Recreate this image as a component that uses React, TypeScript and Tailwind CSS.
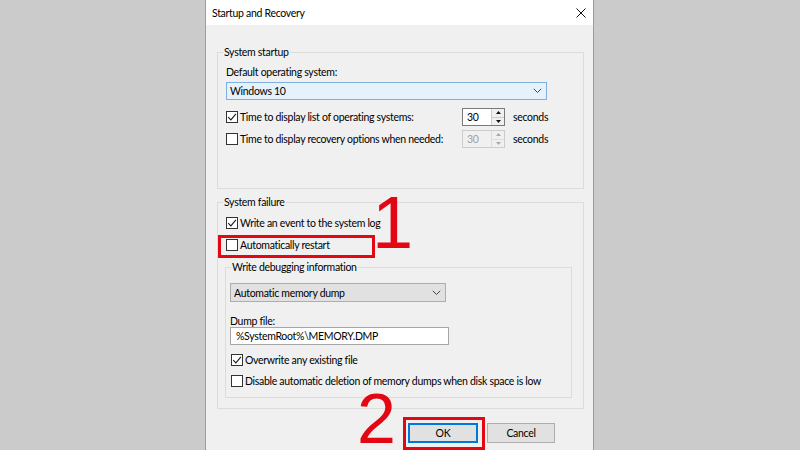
import React from "react";

function Check({ checked }: { checked?: boolean }) {
  return (
    <span className="flex h-[12px] w-[12px] shrink-0 items-center justify-center border border-[#333333] bg-white">
      {checked ? (
        <svg width="10" height="10" viewBox="0 0 10 10">
          <path d="M1.2 5.2 L3.9 7.9 L8.9 1.9" fill="none" stroke="#1a1a1a" strokeWidth="1.1" />
        </svg>
      ) : null}
    </span>
  );
}

function CheckRow({ checked, label }: { checked?: boolean; label: string }) {
  return (
    <div className="flex h-[14px] items-center">
      <Check checked={checked} />
      <span className="ml-[2px] whitespace-nowrap leading-[14px]">{label}</span>
    </div>
  );
}

function Chevron() {
  return (
    <svg width="9" height="6" viewBox="0 0 9 6">
      <path d="M0.8 0.8 L4.5 4.5 L8.2 0.8" fill="none" stroke="#444" strokeWidth="1" />
    </svg>
  );
}

function Tri({ up, color }: { up?: boolean; color: string }) {
  return (
    <svg width="5" height="3" viewBox="0 0 5 3">
      <path d={up ? "M0 3 L2.5 0 L5 3 Z" : "M0 0 L2.5 3 L5 0 Z"} fill={color} />
    </svg>
  );
}

function Spin({ disabled }: { disabled?: boolean }) {
  return (
    <div
      className={
        disabled
          ? "flex h-[18px] w-[43px] border border-[#cccccc] bg-[#f0f0f0] text-[#a0a0a0]"
          : "flex h-[18px] w-[43px] border border-[#7a7a7a] bg-white text-black"
      }
    >
      <span className="flex-1 pl-[4px] leading-[16px]">30</span>
      <div
        className={
          disabled
            ? "flex w-[13px] flex-col border-l border-[#dddddd] bg-[#f0f0f0]"
            : "flex w-[13px] flex-col border-l border-[#cccccc] bg-[#f0f0f0]"
        }
      >
        <div className="flex flex-1 items-center justify-center">
          <Tri up color={disabled ? "#a8a8a8" : "#111"} />
        </div>
        <div
          className={
            disabled
              ? "flex flex-1 items-center justify-center border-t border-[#dddddd]"
              : "flex flex-1 items-center justify-center border-t border-[#cccccc]"
          }
        >
          <Tri color={disabled ? "#a8a8a8" : "#111"} />
        </div>
      </div>
    </div>
  );
}

export default function App() {
  return (
    <div className="relative flex h-[450px] w-[800px] overflow-hidden bg-[#cbcbcb] pl-[205px] font-['Lato',sans-serif] text-[10.5px] tracking-[-0.3px] text-black">
      <div className="flex h-[450px] w-[389px] flex-col border-x border-[#9c9c9c] bg-[#f0f0f0]">
        {/* title bar */}
        <div className="flex h-[25px] shrink-0 items-center justify-between bg-white pl-[6px] pr-[7px]">
          <span className="leading-[14px]">Startup and Recovery</span>
          <svg width="10" height="10" viewBox="0 0 10 10">
            <path d="M0.5 0.5 L9.5 9.5 M9.5 0.5 L0.5 9.5" stroke="#111" strokeWidth="1" />
          </svg>
        </div>

        <div className="flex flex-col pl-[11px] pr-[9px] pt-[20px]">
          {/* System startup */}
          <fieldset className="border border-[#dcdcdc]">
            <legend className="ml-[5px] px-[1px] leading-[14px]">System startup</legend>
            <div className="flex flex-col pb-[40px] pl-[8px] pt-[6px]">
              <div className="leading-[14px]">Default operating system:</div>
              <div className="mt-[3px] flex h-[18px] w-[321px] items-center justify-between border border-[#7fb0e0] bg-[#e5f1fb] pl-[3px] pr-[4px]">
                <span className="leading-[14px]">Windows 10</span>
                <Chevron />
              </div>
              <div className="mt-[8px] flex h-[18px] items-center">
                <div className="w-[236px]">
                  <CheckRow checked label="Time to display list of operating systems:" />
                </div>
                <Spin />
                <span className="ml-[8px] leading-[14px]">seconds</span>
              </div>
              <div className="mt-[4px] flex h-[18px] items-center">
                <div className="w-[236px]">
                  <CheckRow label="Time to display recovery options when needed:" />
                </div>
                <Spin disabled />
                <span className="ml-[8px] leading-[14px]">seconds</span>
              </div>
            </div>
          </fieldset>

          {/* System failure */}
          <fieldset className="mt-[6px] border border-[#dcdcdc]">
            <legend className="ml-[5px] px-[1px] leading-[14px]">System failure</legend>
            <div className="flex flex-col pb-[10px] pl-[8px] pt-[7px]">
              <CheckRow checked label="Write an event to the system log" />
              <div className="mt-[8px]">
                <CheckRow label="Automatically restart" />
              </div>
              <fieldset className="-ml-[1px] mr-[11px] mt-[8px] border border-[#dcdcdc]">
                <legend className="ml-[5px] px-[1px] leading-[14px]">Write debugging information</legend>
                <div className="flex flex-col pb-[9px] pl-[4px] pt-[9px]">
                  <div className="flex h-[19px] w-[216px] items-center justify-between border border-[#adadad] bg-[#e1e1e1] pl-[3px] pr-[4px]">
                    <span className="leading-[14px]">Automatic memory dump</span>
                    <Chevron />
                  </div>
                  <div className="mt-[13px] leading-[12px]">Dump file:</div>
                  <div className="flex h-[18px] w-[219px] items-center border border-[#a6a6a6] bg-white pl-[5px]">
                    <span className="leading-[14px]">%SystemRoot%\MEMORY.DMP</span>
                  </div>
                  <div className="ml-[1px] mt-[8px]">
                    <CheckRow checked label="Overwrite any existing file" />
                  </div>
                  <div className="ml-[1px] mt-[7px]">
                    <CheckRow label="Disable automatic deletion of memory dumps when disk space is low" />
                  </div>
                </div>
              </fieldset>
            </div>
          </fieldset>

          {/* buttons */}
          <div className="mt-[14px] flex justify-end gap-[9px] pr-[29px]">
            <div className="flex h-[20px] w-[70px] items-center justify-center border-2 border-[#0078d7] bg-[#e1e1e1]">
              <span className="leading-[14px]">OK</span>
            </div>
            <div className="flex h-[20px] w-[68px] items-center justify-center border border-[#adadad] bg-[#e1e1e1]">
              <span className="leading-[14px]">Cancel</span>
            </div>
          </div>
        </div>
      </div>

      {/* annotations */}
      <div className="absolute left-[218px] top-[235px] h-[23px] w-[157px] border-[3px] border-[#e30613]" />
      <div className="absolute left-[403px] top-[417px] h-[33px] w-[82px] border-[3px] border-[#e30613]" />
      <span className="absolute left-[372px] top-[193px] font-['Liberation_Sans',sans-serif] text-[74px] leading-[60px] tracking-normal text-[#e30613]">
        1
      </span>
      <span className="absolute left-[357px] top-[394px] font-['Liberation_Sans',sans-serif] text-[70px] leading-[50px] tracking-normal text-[#e30613]">
        2
      </span>
    </div>
  );
}
